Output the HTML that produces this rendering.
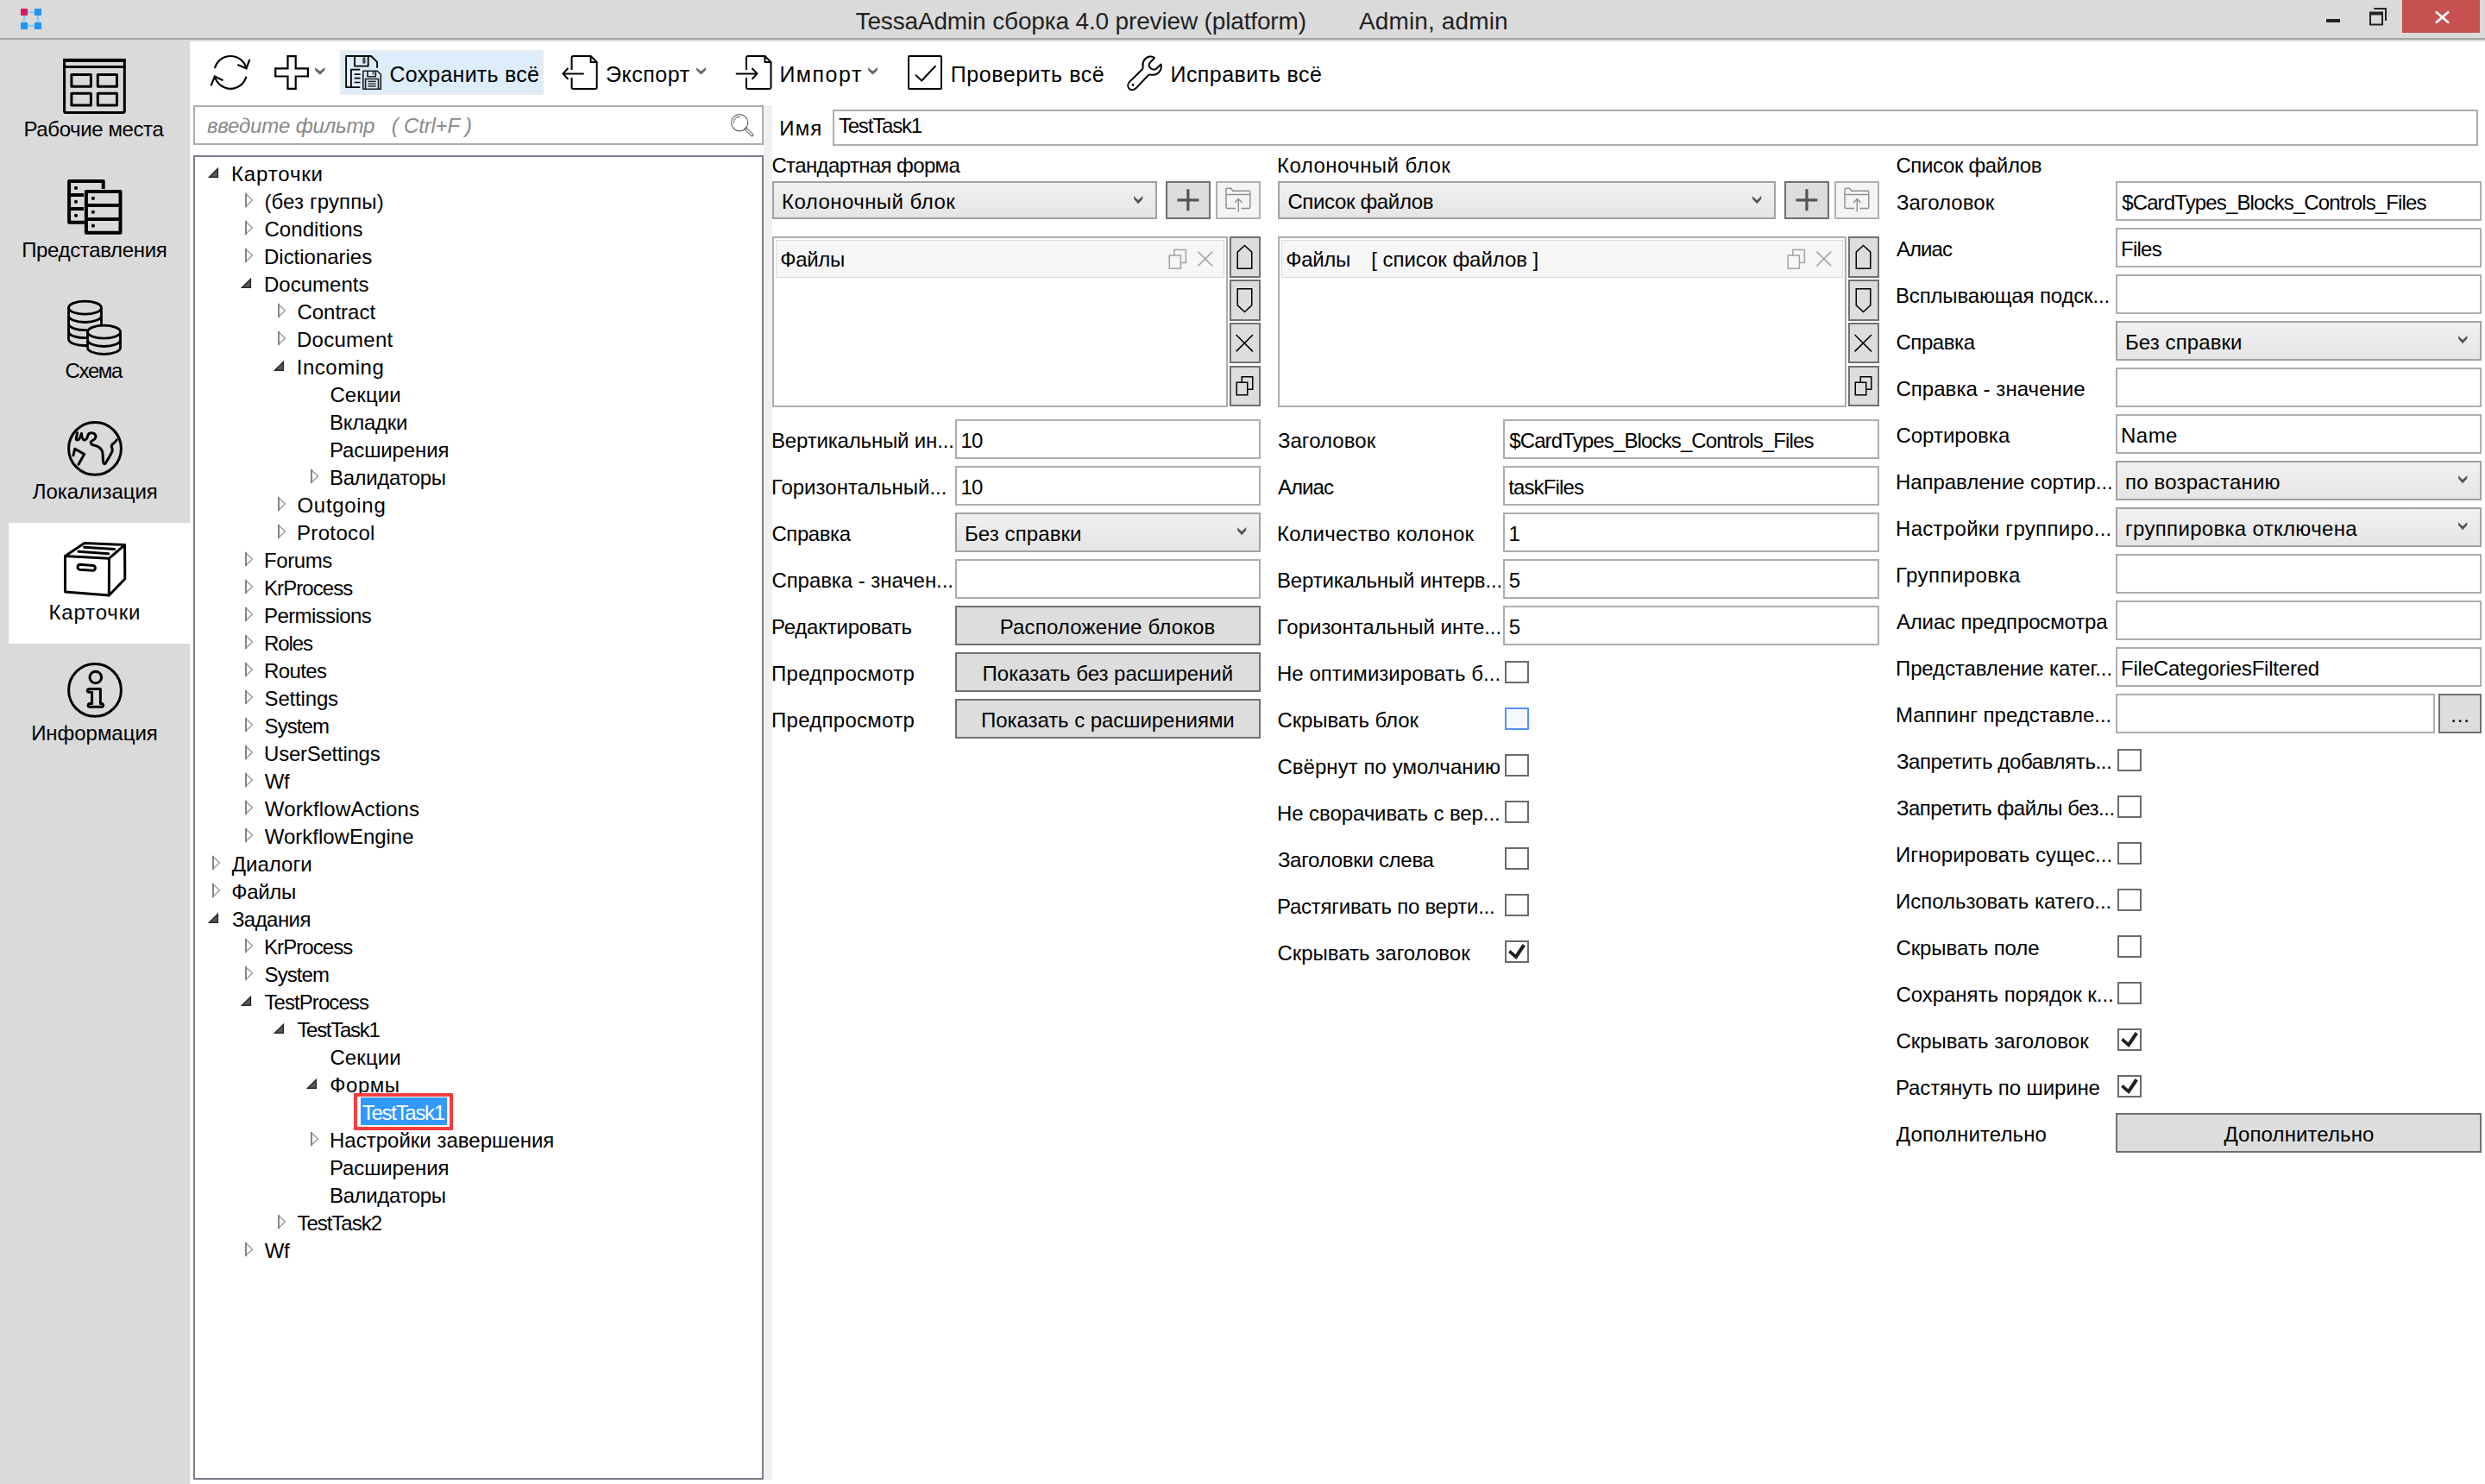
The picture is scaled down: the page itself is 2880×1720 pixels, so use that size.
<!DOCTYPE html>
<html lang="ru"><head><meta charset="utf-8"><title>TessaAdmin</title><style>
html,body{margin:0;padding:0}
body{width:2880px;height:1720px;overflow:hidden;background:#dadada;position:relative;font-family:"Liberation Sans", sans-serif;font-size:24px;color:#000}
.g{position:absolute;left:0;top:0;width:0;height:0;display:block}
body>div,.g>div,.g>svg,.g>span{position:absolute;box-sizing:border-box}
.t{white-space:pre;display:block}
svg{overflow:visible}
</style></head>
<body>
<div style="left:0px;top:44px;width:2880px;height:2px;background:#a4a4a4"></div>
<div style="left:220px;top:48px;width:2660px;height:1672px;background:#fff"></div>
<header class="g" id="titlebar">
<svg style="left:20px;top:6px" width="32" height="32" viewBox="0 0 32 32" ><g fill="#90caf9"><rect x="12" y="6.7" width="8" height="2.6"/><rect x="12" y="22.7" width="8" height="2.6"/><rect x="6.6" y="12" width="2.7" height="8"/><rect x="22.6" y="12" width="2.7" height="8"/></g>
<rect x="4" y="4" width="8" height="8" fill="#d81b60"/><rect x="20" y="4" width="8" height="8" fill="#2196f3"/><rect x="4" y="20" width="8" height="8" fill="#2196f3"/><rect x="20" y="20" width="8" height="8" fill="#2196f3"/></svg>
<span class="t" style="left:991.56px;top:6.60px;font-size:28px;line-height:35px;color:#222;letter-spacing:-0.153px;">TessaAdmin сборка 4.0 preview (platform)</span>
<span class="t" style="left:1575.00px;top:6.60px;font-size:28px;line-height:35px;color:#222;letter-spacing:0.126px;">Admin, admin</span>
<div style="left:2696px;top:22px;width:16px;height:4px;background:#222"></div>
<svg style="left:2744px;top:6px" width="26" height="26" viewBox="0 0 26 26" ><path d="M7.2 4 H21 V18" fill="none" stroke="#222" stroke-width="2"/>
<rect x="3" y="10" width="14" height="12.5" fill="none" stroke="#222" stroke-width="2"/><rect x="2" y="7.5" width="16" height="4" fill="#222"/></svg>
<div style="left:2784px;top:0px;width:90px;height:38px;background:#c75050"></div>
<svg style="left:2820px;top:11px" width="22" height="18" viewBox="0 0 22 18" ><path d="M3 2.5 L18 15.5 M18 2.5 L3 15.5" stroke="#fff" stroke-width="2.7" fill="none"/></svg>
</header>
<nav class="g" id="sidebar">
<div style="left:10px;top:606px;width:210px;height:140px;background:#fff"></div>
<svg style="left:0px;top:46px" width="220" height="140" viewBox="0 0 220 140" ><rect x="74.6" y="23.4" width="69.7" height="61.1" rx="1.5" fill="none" stroke="#000" stroke-width="3"/>
<rect x="73.1" y="21.9" width="72.7" height="4" fill="#000"/><rect x="73.1" y="30" width="72.7" height="3" fill="#000"/>
<g fill="none" stroke="#000" stroke-width="3" stroke-linejoin="round"><rect x="82.9" y="40.5" width="22.5" height="13.8"/><rect x="113.3" y="40.5" width="22.2" height="13.8"/><rect x="82.9" y="62.3" width="22.5" height="13.7"/><rect x="113.3" y="62.3" width="22.2" height="13.7"/></g></svg>
<span class="t" style="left:27.50px;top:134.68px;font-size:24px;line-height:30px;letter-spacing:-0.393px;">Рабочие места</span>
<svg style="left:0px;top:186px" width="220" height="140" viewBox="0 0 220 140" ><g fill="none" stroke="#000" stroke-width="4" stroke-linejoin="round"><path d="M97.9 71.8 H80.1 V23.9 H119.7 V33"/><path d="M80 40 H97 M80 56 H97"/>
<rect x="99.9" y="36" width="39.6" height="47.8"/><path d="M100 52 H139.5 M100 68 H139.5"/></g>
<g fill="#000"><circle cx="88" cy="31.9" r="2.1"/><circle cx="88" cy="47.8" r="2.1"/><circle cx="88" cy="63.8" r="2.1"/><circle cx="107.9" cy="43.9" r="2.1"/><circle cx="107.9" cy="59.8" r="2.1"/><circle cx="107.9" cy="75.7" r="2.1"/></g></svg>
<span class="t" style="left:25.15px;top:274.68px;font-size:24px;line-height:30px;letter-spacing:-0.342px;">Представления</span>
<svg style="left:0px;top:326px" width="220" height="140" viewBox="0 0 220 140" ><g fill="none" stroke="#000" stroke-width="2.8">
<ellipse cx="98.5" cy="30.7" rx="19" ry="7.5"/>
<path d="M79.5 30.7 V67 M117.5 30.7 V51"/>
<path d="M79.5 40 A19 7.5 0 0 0 117.5 40"/>
<path d="M79.5 49.3 A19 7.5 0 0 0 101 56.6"/>
<path d="M79.5 58.2 A19 7.5 0 0 0 101.5 65.6"/>
<path d="M79.5 67 A19 7.5 0 0 0 101.5 74.4"/>
<ellipse cx="120.5" cy="58.7" rx="19" ry="7.5"/>
<path d="M101.5 58.7 V77 M139.5 58.7 V77"/>
<path d="M101.5 68 A19 7.5 0 0 0 139.5 68"/>
<path d="M101.5 77 A19 7.5 0 0 0 139.5 77"/></g></svg>
<span class="t" style="left:75.60px;top:414.68px;font-size:24px;line-height:30px;letter-spacing:-1.378px;">Схема</span>
<svg style="left:0px;top:466px" width="220" height="140" viewBox="0 0 220 140" ><circle cx="110" cy="53.9" r="30.4" fill="none" stroke="#000" stroke-width="3"/>
<g fill="none" stroke="#000" stroke-width="3" stroke-linecap="round" stroke-linejoin="round">
<path d="M89.6 35.8 C88.5 41 87.5 44 89.5 44 C92 44 93.5 40 94.5 36.5 C94.5 41 96 44.5 98.5 44 C101.5 43.5 101 39 103 36.5 C106 35 111 36 111 40 C111 43.5 107 44.5 105.3 46 C105 48 106 49.5 108.5 50 C113 51 116 52 118 56 C120 60 119 66 119.5 69 C120 72 121.5 72.5 122.5 70.5 C125 66.5 128.5 61 130 57 C131 54 128.5 52 129.5 50 C131 47.5 134 47 135.3 43.8"/>
<path d="M84.9 61.8 L86.8 54.2 L97.6 60.4 L91 72.2"/></g></svg>
<span class="t" style="left:37.75px;top:554.68px;font-size:24px;line-height:30px;letter-spacing:-0.029px;">Локализация</span>
<svg style="left:0px;top:606px" width="220" height="140" viewBox="0 0 220 140" ><g fill="none" stroke="#000" stroke-width="3" stroke-linejoin="round" stroke-linecap="round">
<path d="M75.5 38.6 L126.5 41.2 L126.3 84 L75.5 80 Z"/>
<path d="M75.5 38.6 L97.8 23.6 L144.6 25.6 L126.5 41.2"/>
<path d="M144.6 25.6 L144.8 65 L126.3 84"/>
<path d="M97.5 28.2 L132.8 30.5 M91 33.2 L125.8 35.8"/>
<path d="M92.6 48.3 L108 49.4 A3 3 0 0 1 107.8 55.3 L92.4 54.2 A3 3 0 0 1 92.6 48.3 Z"/></g></svg>
<span class="t" style="left:56.45px;top:694.68px;font-size:24px;line-height:30px;letter-spacing:0.844px;">Карточки</span>
<svg style="left:0px;top:746px" width="220" height="140" viewBox="0 0 220 140" ><circle cx="110" cy="53.9" r="30.4" fill="none" stroke="#000" stroke-width="3"/>
<circle cx="110.8" cy="39" r="6.8" fill="none" stroke="#000" stroke-width="3"/>
<path d="M103.2 52.4 H116.4 V69.6 H118.6 A2 2 0 0 1 118.6 73.2 H103.2 A2 2 0 0 1 103.2 69.6 H106.6 V56.2 H103.2 A1.9 1.9 0 0 1 103.2 52.4 Z" fill="none" stroke="#000" stroke-width="3" stroke-linejoin="round"/></svg>
<span class="t" style="left:36.15px;top:834.68px;font-size:24px;line-height:30px;letter-spacing:-0.038px;">Информация</span>
</nav>
<div class="g" id="toolbar">
<svg style="left:240px;top:60px" width="54" height="48" viewBox="0 0 54 48" ><g fill="none" stroke="#000" stroke-width="2.2" stroke-linecap="butt">
<path d="M9 19.1 A18.8 18.8 0 0 1 45.4 19.1"/><path d="M35.4 14.9 L45.5 19.2 L49.4 8.8"/>
<path d="M45.4 28.7 A18.8 18.8 0 0 1 9 28.7"/><path d="M4.5 39.3 L8.9 28.6 L18.5 33.2"/></g></svg>
<svg style="left:318px;top:64px" width="40" height="40" viewBox="0 0 40 40" ><path d="M15.5 1.2 H24.7 V15.3 H38.9 V24.5 H24.7 V38.8 H15.5 V24.5 H1.2 V15.3 H15.5 Z" fill="none" stroke="#000" stroke-width="2.2"/></svg>
<svg style="left:364.7px;top:78px" width="11.6" height="8.8" viewBox="0 0 11.6 8.8" ><path d="M0 0.2 L5.8 4.576 L11.6 0 L11.4 3.52 L5.8 8.8 L0.2 3.52 Z" fill="#666"/></svg>
<div style="left:394px;top:58px;width:236px;height:52px;background:#deedfc;border:2px solid #ebebeb"></div>
<svg style="left:398px;top:62px" width="48" height="44" viewBox="0 0 48 44" ><g fill="none" stroke="#000" stroke-width="1.8" stroke-linejoin="round">
<path d="M19.3 39.2 H3.1 V3 H32 L39.1 9.9 V16.8"/>
<path d="M13.1 3 V14.7 H28.7 V3"/>
<path d="M19.3 18.7 H8.9 V39.2"/>
</g>
<rect x="22.3" y="4.3" width="3.3" height="7.5" rx="1.4" fill="#4a4a4a"/>
<g stroke="#000" stroke-width="1.7" stroke-linecap="round"><path d="M13.4 24.1 H19 M13.4 28.7 H19 M13.4 33.5 H19"/></g>
<g fill="none" stroke="#1a1a1a" stroke-width="1.6" stroke-linejoin="round"><path d="M22.8 20.3 H39.3 L43.3 24.3 V41.3 H22.8 Z"/><path d="M28 20.3 V26.7 H37.4 V20.3"/><path d="M25.6 41.3 V29.5 H40.5 V41.3"/></g>
<rect x="33.7" y="21" width="1.8" height="3.8" rx="0.8" fill="#4a4a4a"/>
<g stroke-width="1.5"><path d="M28.5 32.4 H37.7" stroke="#222"/><path d="M28.5 35.2 H37.7 M28.5 38 H37.7" stroke="#5a5a5a" stroke-width="1.9"/></g></svg>
<span class="t" style="left:451.50px;top:71.14px;font-size:25px;line-height:31px;letter-spacing:0.227px;">Сохранить всё</span>
<svg style="left:648px;top:60px" width="48" height="48" viewBox="0 0 48 48" ><g fill="none" stroke="#000" stroke-width="2" stroke-linejoin="round">
<path d="M14.6 21 V7 A2 2 0 0 1 16.6 5 H36.6 L43.7 12 V41 A2 2 0 0 1 41.7 43 H16.6 A2 2 0 0 1 14.6 41 V30"/>
<path d="M36.6 5 V12 H43.7"/><path d="M28.7 25.4 H4.6 M10.4 19 L4.4 25.4 L10.4 31.8"/></g></svg>
<span class="t" style="left:702.00px;top:71.14px;font-size:25px;line-height:31px;letter-spacing:0.536px;">Экспорт</span>
<svg style="left:807.3px;top:78.2px" width="11" height="8.6" viewBox="0 0 11 8.6" ><path d="M0 0.2 L5.5 4.472 L11 0 L10.8 3.44 L5.5 8.6 L0.2 3.44 Z" fill="#666"/></svg>
<svg style="left:848px;top:60px" width="48" height="48" viewBox="0 0 48 48" ><g fill="none" stroke="#000" stroke-width="2" stroke-linejoin="round">
<path d="M17 21 V7 A2 2 0 0 1 19 5 H38.5 L45.5 12 V41 A2 2 0 0 1 43.5 43 H19 A2 2 0 0 1 17 41 V30"/>
<path d="M38.5 5 V12 H45.5"/><path d="M4.8 25.4 H29.4 M23.5 19 L29.6 25.4 L23.5 31.8"/></g></svg>
<span class="t" style="left:903.40px;top:71.14px;font-size:25px;line-height:31px;letter-spacing:1.510px;">Импорт</span>
<svg style="left:1006px;top:78.2px" width="11" height="8.6" viewBox="0 0 11 8.6" ><path d="M0 0.2 L5.5 4.472 L11 0 L10.8 3.44 L5.5 8.6 L0.2 3.44 Z" fill="#666"/></svg>
<svg style="left:1052px;top:64px" width="40" height="40" viewBox="0 0 40 40" ><rect x="1" y="1" width="38" height="38" rx="1" fill="none" stroke="#000" stroke-width="2"/><path d="M9 22.6 L16.2 29.5 L32.4 12.2" fill="none" stroke="#000" stroke-width="2"/></svg>
<span class="t" style="left:1101.80px;top:71.14px;font-size:25px;line-height:31px;letter-spacing:0.536px;">Проверить всё</span>
<svg style="left:1305px;top:62px" width="46" height="46" viewBox="0 0 46 46" ><path d="M27.5 3.6 C22 4.5 18.5 9.5 19.6 15.2 C19.9 16.6 19.6 17.6 18.7 18.5 L4.3 32.6 C1.6 35.3 1.7 38.6 3.6 40.6 C5.6 42.7 9 42.7 11.5 40.2 L25.6 25.5 C26.6 24.5 27.6 24.3 28.9 24.6 C34.5 25.8 39.8 22.2 40.8 16.4 C41 15.2 40.9 13.8 40.5 12.6 L35.2 17.6 C33.5 19.2 30.6 18.9 28.6 17 C26.6 15 26.2 12.4 27.8 10.6 L33 5 C31.5 3.7 29.3 3.3 27.5 3.6 Z" fill="none" stroke="#000" stroke-width="2" stroke-linejoin="round"/><circle cx="8" cy="36.4" r="1.4" fill="#000"/></svg>
<span class="t" style="left:1356.50px;top:71.14px;font-size:25px;line-height:31px;letter-spacing:0.452px;">Исправить всё</span>
</div>
<aside class="g" id="navigator">
<div style="left:224px;top:122px;width:661px;height:46px;border:2px solid #abadb3;background:#fff"></div>
<span class="t" style="left:239.90px;top:131.18px;font-size:24px;line-height:30px;color:#8a8a8a;letter-spacing:-0.180px;font-style:italic;">введите фильтр   ( Ctrl+F )</span>
<svg style="left:844px;top:128px" width="34" height="34" viewBox="0 0 34 34" ><circle cx="13.2" cy="14.2" r="9.6" fill="none" stroke="#6e6e6e" stroke-width="1.3"/><path d="M6.45 14.6 A6.85 6.85 0 0 1 14 7.3" fill="none" stroke="#6e6e6e" stroke-width="1.2"/><path d="M20.4 21.3 L27.6 28.5" stroke="#6e6e6e" stroke-width="3.8" stroke-linecap="round"/><path d="M21.2 22.1 L27.3 28.2" stroke="#fff" stroke-width="1.5" stroke-linecap="round"/></svg>
<div style="left:224px;top:180px;width:661px;height:1535px;border:2px solid #787e8a;background:#fff"></div>
<div style="left:885px;top:122px;width:10px;height:1593px;background:#f0f0f0"></div>
<span class="t" style="left:268.00px;top:187.28px;font-size:24px;line-height:30px;letter-spacing:0.844px;">Карточки</span>
<span class="t" style="left:306.40px;top:219.28px;font-size:24px;line-height:30px;letter-spacing:0.115px;">(без группы)</span>
<span class="t" style="left:306.40px;top:251.28px;font-size:24px;line-height:30px;letter-spacing:0.089px;">Conditions</span>
<span class="t" style="left:306.00px;top:283.28px;font-size:24px;line-height:30px;letter-spacing:-0.016px;">Dictionaries</span>
<span class="t" style="left:306.00px;top:315.28px;font-size:24px;line-height:30px;letter-spacing:0.015px;">Documents</span>
<span class="t" style="left:344.40px;top:347.28px;font-size:24px;line-height:30px;letter-spacing:0.009px;">Contract</span>
<span class="t" style="left:344.00px;top:379.28px;font-size:24px;line-height:30px;letter-spacing:0.269px;">Document</span>
<span class="t" style="left:343.70px;top:411.28px;font-size:24px;line-height:30px;letter-spacing:0.538px;">Incoming</span>
<span class="t" style="left:382.40px;top:443.28px;font-size:24px;line-height:30px;letter-spacing:0.114px;">Секции</span>
<span class="t" style="left:382.00px;top:475.28px;font-size:24px;line-height:30px;letter-spacing:-0.272px;">Вкладки</span>
<span class="t" style="left:382.00px;top:507.28px;font-size:24px;line-height:30px;letter-spacing:-0.130px;">Расширения</span>
<span class="t" style="left:382.00px;top:539.28px;font-size:24px;line-height:30px;letter-spacing:-0.368px;">Валидаторы</span>
<span class="t" style="left:344.50px;top:571.28px;font-size:24px;line-height:30px;letter-spacing:0.692px;">Outgoing</span>
<span class="t" style="left:344.00px;top:603.28px;font-size:24px;line-height:30px;letter-spacing:0.341px;">Protocol</span>
<span class="t" style="left:306.00px;top:635.28px;font-size:24px;line-height:30px;letter-spacing:-0.408px;">Forums</span>
<span class="t" style="left:306.00px;top:667.28px;font-size:24px;line-height:30px;letter-spacing:-0.937px;">KrProcess</span>
<span class="t" style="left:306.00px;top:699.28px;font-size:24px;line-height:30px;letter-spacing:-0.600px;">Permissions</span>
<span class="t" style="left:306.00px;top:731.28px;font-size:24px;line-height:30px;letter-spacing:-1.065px;">Roles</span>
<span class="t" style="left:306.00px;top:763.28px;font-size:24px;line-height:30px;letter-spacing:-0.629px;">Routes</span>
<span class="t" style="left:306.60px;top:795.28px;font-size:24px;line-height:30px;letter-spacing:-0.174px;">Settings</span>
<span class="t" style="left:306.60px;top:827.28px;font-size:24px;line-height:30px;letter-spacing:-0.945px;">System</span>
<span class="t" style="left:306.10px;top:859.28px;font-size:24px;line-height:30px;letter-spacing:-0.254px;">UserSettings</span>
<span class="t" style="left:306.80px;top:891.28px;font-size:24px;line-height:30px;letter-spacing:-0.352px;">Wf</span>
<span class="t" style="left:306.80px;top:923.28px;font-size:24px;line-height:30px;letter-spacing:0.168px;">WorkflowActions</span>
<span class="t" style="left:306.80px;top:955.28px;font-size:24px;line-height:30px;letter-spacing:-0.017px;">WorkflowEngine</span>
<span class="t" style="left:268.80px;top:987.28px;font-size:24px;line-height:30px;">Диалоги</span>
<span class="t" style="left:268.30px;top:1019.28px;font-size:24px;line-height:30px;letter-spacing:-0.326px;">Файлы</span>
<span class="t" style="left:268.90px;top:1051.28px;font-size:24px;line-height:30px;letter-spacing:-0.543px;">Задания</span>
<span class="t" style="left:306.00px;top:1083.28px;font-size:24px;line-height:30px;letter-spacing:-0.937px;">KrProcess</span>
<span class="t" style="left:306.60px;top:1115.28px;font-size:24px;line-height:30px;letter-spacing:-0.945px;">System</span>
<span class="t" style="left:306.40px;top:1147.28px;font-size:24px;line-height:30px;letter-spacing:-0.921px;">TestProcess</span>
<span class="t" style="left:344.40px;top:1179.28px;font-size:24px;line-height:30px;letter-spacing:-1.295px;">TestTask1</span>
<span class="t" style="left:382.40px;top:1211.28px;font-size:24px;line-height:30px;letter-spacing:0.114px;">Секции</span>
<span class="t" style="left:382.30px;top:1243.28px;font-size:24px;line-height:30px;letter-spacing:0.515px;">Формы</span>
<div style="left:410px;top:1267px;width:115px;height:43px;border:4px solid #fa3c3f;background:#fff"></div>
<div style="left:418px;top:1272px;width:100px;height:32px;background:#3399ff"></div>
<span class="t" style="left:419.80px;top:1275.28px;font-size:24px;line-height:30px;color:#fff;letter-spacing:-1.295px;">TestTask1</span>
<span class="t" style="left:382.00px;top:1307.28px;font-size:24px;line-height:30px;letter-spacing:0.009px;">Настройки завершения</span>
<span class="t" style="left:382.00px;top:1339.28px;font-size:24px;line-height:30px;letter-spacing:-0.130px;">Расширения</span>
<span class="t" style="left:382.00px;top:1371.28px;font-size:24px;line-height:30px;letter-spacing:-0.368px;">Валидаторы</span>
<span class="t" style="left:344.40px;top:1403.28px;font-size:24px;line-height:30px;letter-spacing:-1.008px;">TestTask2</span>
<span class="t" style="left:306.80px;top:1435.28px;font-size:24px;line-height:30px;letter-spacing:-0.352px;">Wf</span>
<svg style="left:224px;top:184px" width="400" height="1290" viewBox="0 0 400 1290" ><path d="M28.4 11.5 V21.3 H18.5 Z" fill="#595959" stroke="#262626" stroke-width="1.4" stroke-linejoin="miter"/><path d="M61 40.9 L68.5 48 L61 55.1 Z" fill="#fff" stroke="#9a9a9a" stroke-width="1.4" stroke-linejoin="round"/><rect x="60" y="39.8" width="2" height="16.4" fill="#858585"/><path d="M61 72.9 L68.5 80 L61 87.1 Z" fill="#fff" stroke="#9a9a9a" stroke-width="1.4" stroke-linejoin="round"/><rect x="60" y="71.8" width="2" height="16.4" fill="#858585"/><path d="M61 104.9 L68.5 112 L61 119.1 Z" fill="#fff" stroke="#9a9a9a" stroke-width="1.4" stroke-linejoin="round"/><rect x="60" y="103.8" width="2" height="16.4" fill="#858585"/><path d="M66.4 139.5 V149.3 H56.5 Z" fill="#595959" stroke="#262626" stroke-width="1.4" stroke-linejoin="miter"/><path d="M99 168.9 L106.5 176 L99 183.1 Z" fill="#fff" stroke="#9a9a9a" stroke-width="1.4" stroke-linejoin="round"/><rect x="98" y="167.8" width="2" height="16.4" fill="#858585"/><path d="M99 200.9 L106.5 208 L99 215.1 Z" fill="#fff" stroke="#9a9a9a" stroke-width="1.4" stroke-linejoin="round"/><rect x="98" y="199.8" width="2" height="16.4" fill="#858585"/><path d="M104.4 235.5 V245.3 H94.5 Z" fill="#595959" stroke="#262626" stroke-width="1.4" stroke-linejoin="miter"/><path d="M137 360.9 L144.5 368 L137 375.1 Z" fill="#fff" stroke="#9a9a9a" stroke-width="1.4" stroke-linejoin="round"/><rect x="136" y="359.8" width="2" height="16.4" fill="#858585"/><path d="M99 392.9 L106.5 400 L99 407.1 Z" fill="#fff" stroke="#9a9a9a" stroke-width="1.4" stroke-linejoin="round"/><rect x="98" y="391.8" width="2" height="16.4" fill="#858585"/><path d="M99 424.9 L106.5 432 L99 439.1 Z" fill="#fff" stroke="#9a9a9a" stroke-width="1.4" stroke-linejoin="round"/><rect x="98" y="423.8" width="2" height="16.4" fill="#858585"/><path d="M61 456.9 L68.5 464 L61 471.1 Z" fill="#fff" stroke="#9a9a9a" stroke-width="1.4" stroke-linejoin="round"/><rect x="60" y="455.8" width="2" height="16.4" fill="#858585"/><path d="M61 488.9 L68.5 496 L61 503.1 Z" fill="#fff" stroke="#9a9a9a" stroke-width="1.4" stroke-linejoin="round"/><rect x="60" y="487.8" width="2" height="16.4" fill="#858585"/><path d="M61 520.9 L68.5 528 L61 535.1 Z" fill="#fff" stroke="#9a9a9a" stroke-width="1.4" stroke-linejoin="round"/><rect x="60" y="519.8" width="2" height="16.4" fill="#858585"/><path d="M61 552.9 L68.5 560 L61 567.1 Z" fill="#fff" stroke="#9a9a9a" stroke-width="1.4" stroke-linejoin="round"/><rect x="60" y="551.8" width="2" height="16.4" fill="#858585"/><path d="M61 584.9 L68.5 592 L61 599.1 Z" fill="#fff" stroke="#9a9a9a" stroke-width="1.4" stroke-linejoin="round"/><rect x="60" y="583.8" width="2" height="16.4" fill="#858585"/><path d="M61 616.9 L68.5 624 L61 631.1 Z" fill="#fff" stroke="#9a9a9a" stroke-width="1.4" stroke-linejoin="round"/><rect x="60" y="615.8" width="2" height="16.4" fill="#858585"/><path d="M61 648.9 L68.5 656 L61 663.1 Z" fill="#fff" stroke="#9a9a9a" stroke-width="1.4" stroke-linejoin="round"/><rect x="60" y="647.8" width="2" height="16.4" fill="#858585"/><path d="M61 680.9 L68.5 688 L61 695.1 Z" fill="#fff" stroke="#9a9a9a" stroke-width="1.4" stroke-linejoin="round"/><rect x="60" y="679.8" width="2" height="16.4" fill="#858585"/><path d="M61 712.9 L68.5 720 L61 727.1 Z" fill="#fff" stroke="#9a9a9a" stroke-width="1.4" stroke-linejoin="round"/><rect x="60" y="711.8" width="2" height="16.4" fill="#858585"/><path d="M61 744.9 L68.5 752 L61 759.1 Z" fill="#fff" stroke="#9a9a9a" stroke-width="1.4" stroke-linejoin="round"/><rect x="60" y="743.8" width="2" height="16.4" fill="#858585"/><path d="M61 776.9 L68.5 784 L61 791.1 Z" fill="#fff" stroke="#9a9a9a" stroke-width="1.4" stroke-linejoin="round"/><rect x="60" y="775.8" width="2" height="16.4" fill="#858585"/><path d="M23 808.9 L30.5 816 L23 823.1 Z" fill="#fff" stroke="#9a9a9a" stroke-width="1.4" stroke-linejoin="round"/><rect x="22" y="807.8" width="2" height="16.4" fill="#858585"/><path d="M23 840.9 L30.5 848 L23 855.1 Z" fill="#fff" stroke="#9a9a9a" stroke-width="1.4" stroke-linejoin="round"/><rect x="22" y="839.8" width="2" height="16.4" fill="#858585"/><path d="M28.4 875.5 V885.3 H18.5 Z" fill="#595959" stroke="#262626" stroke-width="1.4" stroke-linejoin="miter"/><path d="M61 904.9 L68.5 912 L61 919.1 Z" fill="#fff" stroke="#9a9a9a" stroke-width="1.4" stroke-linejoin="round"/><rect x="60" y="903.8" width="2" height="16.4" fill="#858585"/><path d="M61 936.9 L68.5 944 L61 951.1 Z" fill="#fff" stroke="#9a9a9a" stroke-width="1.4" stroke-linejoin="round"/><rect x="60" y="935.8" width="2" height="16.4" fill="#858585"/><path d="M66.4 971.5 V981.3 H56.5 Z" fill="#595959" stroke="#262626" stroke-width="1.4" stroke-linejoin="miter"/><path d="M104.4 1003.5 V1013.3 H94.5 Z" fill="#595959" stroke="#262626" stroke-width="1.4" stroke-linejoin="miter"/><path d="M142.4 1067.5 V1077.3 H132.5 Z" fill="#595959" stroke="#262626" stroke-width="1.4" stroke-linejoin="miter"/><path d="M137 1128.9 L144.5 1136 L137 1143.1 Z" fill="#fff" stroke="#9a9a9a" stroke-width="1.4" stroke-linejoin="round"/><rect x="136" y="1127.8" width="2" height="16.4" fill="#858585"/><path d="M99 1224.9 L106.5 1232 L99 1239.1 Z" fill="#fff" stroke="#9a9a9a" stroke-width="1.4" stroke-linejoin="round"/><rect x="98" y="1223.8" width="2" height="16.4" fill="#858585"/><path d="M61 1256.9 L68.5 1264 L61 1271.1 Z" fill="#fff" stroke="#9a9a9a" stroke-width="1.4" stroke-linejoin="round"/><rect x="60" y="1255.8" width="2" height="16.4" fill="#858585"/></svg>
</aside>
<main class="g" id="editor">
<span class="t" style="left:903.30px;top:134.08px;font-size:24px;line-height:30px;letter-spacing:1.125px;">Имя</span>
<div style="left:965px;top:127px;width:1907px;height:42px;border:2px solid #abadb3;background:#fff"></div>
<span class="t" style="left:971.90px;top:130.58px;font-size:24px;line-height:30px;letter-spacing:-1.183px;">TestTask1</span>
<section class="g" id="col-form">
<span class="t" style="left:894.40px;top:176.88px;font-size:24px;line-height:30px;letter-spacing:-0.620px;">Стандартная форма</span>
<div style="left:895px;top:210px;width:446px;height:44px;border:2px solid #a2a2a2;background:linear-gradient(#f1f1f1,#e5e5e5)"></div>
<svg style="left:1313.7px;top:226.8px" width="10.4" height="9.3" viewBox="0 0 10.4 9.3" ><path d="M0 0.2 L5.1 4.9 L10.4 0 L10.2 3.7 L5.1 9.3 L0.2 3.7 Z" fill="#555"/></svg>
<span class="t" style="left:906.00px;top:218.68px;font-size:24px;line-height:30px;letter-spacing:0.452px;">Колоночный блок</span>
<div style="left:1351px;top:210px;width:52px;height:44px;border:2px solid #707070;background:#dddddd"></div>
<svg style="left:1351px;top:210px" width="52" height="44" viewBox="0 0 52 44" ><path d="M13.4 21.9 H38.4 M25.9 9.3 V34.3" stroke="#555" stroke-width="3.2" fill="none"/></svg>
<div style="left:1409px;top:210px;width:52px;height:44px;border:2px solid #adb2b5;background:#f4f4f4"></div>
<svg style="left:1409px;top:210px" width="52" height="44" viewBox="0 0 52 44" ><g fill="none" stroke="#8d8d8d" stroke-width="1.4" stroke-linejoin="round">
<path d="M23 31.5 H13.5 A1.5 1.5 0 0 1 12 30 V9.8 A1.5 1.5 0 0 1 13.5 8.3 H17.5 L19.8 11.3 H38.3 A1.5 1.5 0 0 1 39.8 12.8 V30 A1.5 1.5 0 0 1 38.3 31.5 H29.5"/>
<path d="M12 15.5 H39.8"/><path d="M26.3 35.6 V20.6 M22 24.9 L26.3 20.6 L30.6 24.9"/></g></svg>
<div style="left:895px;top:274px;width:528px;height:197.5px;border:2px solid #abadb3;background:#fff"></div>
<div style="left:899.3px;top:278.3px;width:519.4px;height:43.4px;border:1.5px solid #dadada;background:#f6f6f6"></div>
<span class="t" style="left:904.30px;top:286.28px;font-size:24px;line-height:30px;letter-spacing:-0.326px;">Файлы</span>
<svg style="left:1352.7px;top:286px" width="24" height="28" viewBox="0 0 24 28" ><g fill="none" stroke="#a3a3a3" stroke-width="1.5"><rect x="2.2" y="10" width="13.2" height="15.2"/><path d="M7.8 10 V3.4 H21.4 V18.6 H15.4"/></g></svg>
<svg style="left:1387.2px;top:290px" width="20" height="20" viewBox="0 0 20 20" ><path d="M1.4 1.6 L18.2 18.4 M18.2 1.6 L1.4 18.4" stroke="#a8a8a8" stroke-width="1.6" fill="none"/></svg>
<div style="left:1425px;top:274px;width:36px;height:48px;border:2px solid #707070;background:#dddddd"></div>
<svg style="left:1425px;top:274px" width="36" height="48" viewBox="0 0 36 48" ><path d="M17.5 10.5 L25.75 18.2 V37.25 H9.25 V18.2 Z" fill="none" stroke="#000" stroke-width="1.5"/></svg>
<div style="left:1425px;top:324px;width:36px;height:48px;border:2px solid #707070;background:#dddddd"></div>
<svg style="left:1425px;top:324px" width="36" height="48" viewBox="0 0 36 48" ><path d="M17.5 37.5 L25.75 29.8 V10.75 H9.25 V29.8 Z" fill="none" stroke="#000" stroke-width="1.5"/></svg>
<div style="left:1425px;top:374px;width:36px;height:47px;border:2px solid #707070;background:#dddddd"></div>
<svg style="left:1425px;top:374px" width="36" height="48" viewBox="0 0 36 48" ><path d="M7.6 14 L27 33.4 M27 14 L7.6 33.4" fill="none" stroke="#000" stroke-width="1.5"/></svg>
<div style="left:1425px;top:424px;width:36px;height:47px;border:2px solid #707070;background:#dddddd"></div>
<svg style="left:1425px;top:424px" width="36" height="48" viewBox="0 0 36 48" ><g fill="none" stroke="#000" stroke-width="1.5"><rect x="8.25" y="19.25" width="12.5" height="14.5"/><path d="M14.25 19.25 V12.75 H26.75 V27.25 H20.75"/></g></svg>
<span class="t" style="left:894.00px;top:495.98px;font-size:24px;line-height:30px;letter-spacing:-0.167px;">Вертикальный ин...</span>
<div style="left:1107px;top:486px;width:354px;height:46px;border:2px solid #abadb3;background:#fff"></div>
<span class="t" style="left:1113.40px;top:495.98px;font-size:24px;line-height:30px;letter-spacing:-0.848px;">10</span>
<span class="t" style="left:894.00px;top:549.98px;font-size:24px;line-height:30px;letter-spacing:0.009px;">Горизонтальный...</span>
<div style="left:1107px;top:540px;width:354px;height:46px;border:2px solid #abadb3;background:#fff"></div>
<span class="t" style="left:1113.40px;top:549.98px;font-size:24px;line-height:30px;letter-spacing:-0.848px;">10</span>
<span class="t" style="left:894.40px;top:603.98px;font-size:24px;line-height:30px;letter-spacing:-0.417px;">Справка</span>
<div style="left:1107px;top:594px;width:354px;height:46px;border:2px solid #a2a2a2;background:linear-gradient(#f1f1f1,#e5e5e5)"></div>
<svg style="left:1433.7px;top:610.8px" width="10.4" height="9.3" viewBox="0 0 10.4 9.3" ><path d="M0 0.2 L5.1 4.9 L10.4 0 L10.2 3.7 L5.1 9.3 L0.2 3.7 Z" fill="#555"/></svg>
<span class="t" style="left:1118.00px;top:603.98px;font-size:24px;line-height:30px;letter-spacing:0.092px;">Без справки</span>
<span class="t" style="left:894.40px;top:657.98px;font-size:24px;line-height:30px;letter-spacing:-0.061px;">Справка - значен...</span>
<div style="left:1107px;top:648px;width:354px;height:46px;border:2px solid #abadb3;background:#fff"></div>
<span class="t" style="left:894.00px;top:711.98px;font-size:24px;line-height:30px;letter-spacing:-0.223px;">Редактировать</span>
<div style="left:1107px;top:702px;width:354px;height:46px;border:2px solid #707070;background:#dddddd"></div>
<span class="t" style="left:1158.75px;top:711.98px;font-size:24px;line-height:30px;letter-spacing:0.144px;">Расположение блоков</span>
<span class="t" style="left:894.00px;top:765.98px;font-size:24px;line-height:30px;letter-spacing:0.279px;">Предпросмотр</span>
<div style="left:1107px;top:756px;width:354px;height:46px;border:2px solid #707070;background:#dddddd"></div>
<span class="t" style="left:1138.60px;top:765.98px;font-size:24px;line-height:30px;letter-spacing:-0.012px;">Показать без расширений</span>
<span class="t" style="left:894.00px;top:819.98px;font-size:24px;line-height:30px;letter-spacing:0.279px;">Предпросмотр</span>
<div style="left:1107px;top:810px;width:354px;height:46px;border:2px solid #707070;background:#dddddd"></div>
<span class="t" style="left:1136.95px;top:819.98px;font-size:24px;line-height:30px;letter-spacing:-0.053px;">Показать с расширениями</span>
</section>
<section class="g" id="col-block">
<span class="t" style="left:1480.00px;top:176.88px;font-size:24px;line-height:30px;letter-spacing:0.452px;">Колоночный блок</span>
<div style="left:1481px;top:210px;width:577px;height:44px;border:2px solid #a2a2a2;background:linear-gradient(#f1f1f1,#e5e5e5)"></div>
<svg style="left:2030.7px;top:226.8px" width="10.4" height="9.3" viewBox="0 0 10.4 9.3" ><path d="M0 0.2 L5.1 4.9 L10.4 0 L10.2 3.7 L5.1 9.3 L0.2 3.7 Z" fill="#555"/></svg>
<span class="t" style="left:1492.40px;top:218.68px;font-size:24px;line-height:30px;letter-spacing:-0.353px;">Список файлов</span>
<div style="left:2068px;top:210px;width:52px;height:44px;border:2px solid #707070;background:#dddddd"></div>
<svg style="left:2068px;top:210px" width="52" height="44" viewBox="0 0 52 44" ><path d="M13.4 21.9 H38.4 M25.9 9.3 V34.3" stroke="#555" stroke-width="3.2" fill="none"/></svg>
<div style="left:2126px;top:210px;width:52px;height:44px;border:2px solid #adb2b5;background:#f4f4f4"></div>
<svg style="left:2126px;top:210px" width="52" height="44" viewBox="0 0 52 44" ><g fill="none" stroke="#8d8d8d" stroke-width="1.4" stroke-linejoin="round">
<path d="M23 31.5 H13.5 A1.5 1.5 0 0 1 12 30 V9.8 A1.5 1.5 0 0 1 13.5 8.3 H17.5 L19.8 11.3 H38.3 A1.5 1.5 0 0 1 39.8 12.8 V30 A1.5 1.5 0 0 1 38.3 31.5 H29.5"/>
<path d="M12 15.5 H39.8"/><path d="M26.3 35.6 V20.6 M22 24.9 L26.3 20.6 L30.6 24.9"/></g></svg>
<div style="left:1481px;top:274px;width:659px;height:197.5px;border:2px solid #abadb3;background:#fff"></div>
<div style="left:1485.3px;top:278.3px;width:650.4px;height:43.4px;border:1.5px solid #dadada;background:#f6f6f6"></div>
<span class="t" style="left:1490.30px;top:286.28px;font-size:24px;line-height:30px;letter-spacing:-0.326px;">Файлы</span>
<span class="t" style="left:1589.30px;top:286.28px;font-size:24px;line-height:30px;letter-spacing:-0.048px;">[ список файлов ]</span>
<svg style="left:2069.7px;top:286px" width="24" height="28" viewBox="0 0 24 28" ><g fill="none" stroke="#a3a3a3" stroke-width="1.5"><rect x="2.2" y="10" width="13.2" height="15.2"/><path d="M7.8 10 V3.4 H21.4 V18.6 H15.4"/></g></svg>
<svg style="left:2104.2px;top:290px" width="20" height="20" viewBox="0 0 20 20" ><path d="M1.4 1.6 L18.2 18.4 M18.2 1.6 L1.4 18.4" stroke="#a8a8a8" stroke-width="1.6" fill="none"/></svg>
<div style="left:2142px;top:274px;width:36px;height:48px;border:2px solid #707070;background:#dddddd"></div>
<svg style="left:2142px;top:274px" width="36" height="48" viewBox="0 0 36 48" ><path d="M17.5 10.5 L25.75 18.2 V37.25 H9.25 V18.2 Z" fill="none" stroke="#000" stroke-width="1.5"/></svg>
<div style="left:2142px;top:324px;width:36px;height:48px;border:2px solid #707070;background:#dddddd"></div>
<svg style="left:2142px;top:324px" width="36" height="48" viewBox="0 0 36 48" ><path d="M17.5 37.5 L25.75 29.8 V10.75 H9.25 V29.8 Z" fill="none" stroke="#000" stroke-width="1.5"/></svg>
<div style="left:2142px;top:374px;width:36px;height:47px;border:2px solid #707070;background:#dddddd"></div>
<svg style="left:2142px;top:374px" width="36" height="48" viewBox="0 0 36 48" ><path d="M7.6 14 L27 33.4 M27 14 L7.6 33.4" fill="none" stroke="#000" stroke-width="1.5"/></svg>
<div style="left:2142px;top:424px;width:36px;height:47px;border:2px solid #707070;background:#dddddd"></div>
<svg style="left:2142px;top:424px" width="36" height="48" viewBox="0 0 36 48" ><g fill="none" stroke="#000" stroke-width="1.5"><rect x="8.25" y="19.25" width="12.5" height="14.5"/><path d="M14.25 19.25 V12.75 H26.75 V27.25 H20.75"/></g></svg>
<span class="t" style="left:1480.90px;top:495.98px;font-size:24px;line-height:30px;letter-spacing:0.058px;">Заголовок</span>
<div style="left:1742px;top:486px;width:436px;height:46px;border:2px solid #abadb3;background:#fff"></div>
<span class="t" style="left:1749.20px;top:495.98px;font-size:24px;line-height:30px;letter-spacing:-0.867px;">$CardTypes_Blocks_Controls_Files</span>
<span class="t" style="left:1480.90px;top:549.98px;font-size:24px;line-height:30px;letter-spacing:-0.916px;">Алиас</span>
<div style="left:1742px;top:540px;width:436px;height:46px;border:2px solid #abadb3;background:#fff"></div>
<span class="t" style="left:1748.20px;top:549.98px;font-size:24px;line-height:30px;letter-spacing:-0.873px;">taskFiles</span>
<span class="t" style="left:1480.00px;top:603.98px;font-size:24px;line-height:30px;letter-spacing:0.243px;">Количество колонок</span>
<div style="left:1742px;top:594px;width:436px;height:46px;border:2px solid #abadb3;background:#fff"></div>
<span class="t" style="left:1748.40px;top:603.98px;font-size:24px;line-height:30px;">1</span>
<span class="t" style="left:1480.00px;top:657.98px;font-size:24px;line-height:30px;letter-spacing:-0.181px;">Вертикальный интерв...</span>
<div style="left:1742px;top:648px;width:436px;height:46px;border:2px solid #abadb3;background:#fff"></div>
<span class="t" style="left:1748.70px;top:657.98px;font-size:24px;line-height:30px;">5</span>
<span class="t" style="left:1480.00px;top:711.98px;font-size:24px;line-height:30px;letter-spacing:-0.026px;">Горизонтальный инте...</span>
<div style="left:1742px;top:702px;width:436px;height:46px;border:2px solid #abadb3;background:#fff"></div>
<span class="t" style="left:1748.70px;top:711.98px;font-size:24px;line-height:30px;">5</span>
<span class="t" style="left:1480.00px;top:765.98px;font-size:24px;line-height:30px;letter-spacing:0.036px;">Не оптимизировать б...</span>
<div style="left:1744px;top:766px;width:28px;height:26px;border:2px solid #6a6a6a;background:#fff"></div>
<span class="t" style="left:1480.40px;top:819.98px;font-size:24px;line-height:30px;letter-spacing:-0.090px;">Скрывать блок</span>
<div style="left:1744px;top:820px;width:28px;height:26px;border:2px solid #5591fb;background:#f4f8ff"></div>
<span class="t" style="left:1480.40px;top:873.98px;font-size:24px;line-height:30px;letter-spacing:0.050px;">Свёрнут по умолчанию</span>
<div style="left:1744px;top:874px;width:28px;height:26px;border:2px solid #6a6a6a;background:#fff"></div>
<span class="t" style="left:1480.00px;top:927.98px;font-size:24px;line-height:30px;letter-spacing:-0.086px;">Не сворачивать с вер...</span>
<div style="left:1744px;top:928px;width:28px;height:26px;border:2px solid #6a6a6a;background:#fff"></div>
<span class="t" style="left:1480.90px;top:981.98px;font-size:24px;line-height:30px;letter-spacing:-0.283px;">Заголовки слева</span>
<div style="left:1744px;top:982px;width:28px;height:26px;border:2px solid #6a6a6a;background:#fff"></div>
<span class="t" style="left:1480.00px;top:1035.98px;font-size:24px;line-height:30px;letter-spacing:-0.253px;">Растягивать по верти...</span>
<div style="left:1744px;top:1036px;width:28px;height:26px;border:2px solid #6a6a6a;background:#fff"></div>
<span class="t" style="left:1480.40px;top:1089.98px;font-size:24px;line-height:30px;">Скрывать заголовок</span>
<div style="left:1744px;top:1090px;width:28px;height:26px;border:2px solid #6a6a6a;background:#fff"></div>
<svg style="left:1744px;top:1090px" width="28" height="26" viewBox="0 0 28 26" ><path d="M6.4 11 L4.2 14.1 L13.4 22 L23.9 6.4 L20.6 4.1 L12.4 16.3 Z" fill="#212121"/></svg>
</section>
<section class="g" id="col-control">
<span class="t" style="left:2197.40px;top:176.88px;font-size:24px;line-height:30px;letter-spacing:-0.353px;">Список файлов</span>
<span class="t" style="left:2197.90px;top:219.98px;font-size:24px;line-height:30px;letter-spacing:0.058px;">Заголовок</span>
<div style="left:2452px;top:210px;width:424px;height:46px;border:2px solid #abadb3;background:#fff"></div>
<span class="t" style="left:2459.20px;top:219.98px;font-size:24px;line-height:30px;letter-spacing:-0.867px;">$CardTypes_Blocks_Controls_Files</span>
<span class="t" style="left:2197.90px;top:273.98px;font-size:24px;line-height:30px;letter-spacing:-0.916px;">Алиас</span>
<div style="left:2452px;top:264px;width:424px;height:46px;border:2px solid #abadb3;background:#fff"></div>
<span class="t" style="left:2458.00px;top:273.98px;font-size:24px;line-height:30px;letter-spacing:-0.743px;">Files</span>
<span class="t" style="left:2197.00px;top:327.98px;font-size:24px;line-height:30px;letter-spacing:-0.163px;">Всплывающая подск...</span>
<div style="left:2452px;top:318px;width:424px;height:46px;border:2px solid #abadb3;background:#fff"></div>
<span class="t" style="left:2197.40px;top:381.98px;font-size:24px;line-height:30px;letter-spacing:-0.417px;">Справка</span>
<div style="left:2452px;top:372px;width:424px;height:46px;border:2px solid #a2a2a2;background:linear-gradient(#f1f1f1,#e5e5e5)"></div>
<svg style="left:2848.7px;top:388.8px" width="10.4" height="9.3" viewBox="0 0 10.4 9.3" ><path d="M0 0.2 L5.1 4.9 L10.4 0 L10.2 3.7 L5.1 9.3 L0.2 3.7 Z" fill="#555"/></svg>
<span class="t" style="left:2463.00px;top:381.98px;font-size:24px;line-height:30px;letter-spacing:0.092px;">Без справки</span>
<span class="t" style="left:2197.40px;top:435.98px;font-size:24px;line-height:30px;letter-spacing:0.049px;">Справка - значение</span>
<div style="left:2452px;top:426px;width:424px;height:46px;border:2px solid #abadb3;background:#fff"></div>
<span class="t" style="left:2197.40px;top:489.98px;font-size:24px;line-height:30px;letter-spacing:0.014px;">Сортировка</span>
<div style="left:2452px;top:480px;width:424px;height:46px;border:2px solid #abadb3;background:#fff"></div>
<span class="t" style="left:2458.00px;top:489.98px;font-size:24px;line-height:30px;letter-spacing:0.476px;">Name</span>
<span class="t" style="left:2197.00px;top:543.98px;font-size:24px;line-height:30px;letter-spacing:-0.056px;">Направление сортир...</span>
<div style="left:2452px;top:534px;width:424px;height:46px;border:2px solid #a2a2a2;background:linear-gradient(#f1f1f1,#e5e5e5)"></div>
<svg style="left:2848.7px;top:550.8px" width="10.4" height="9.3" viewBox="0 0 10.4 9.3" ><path d="M0 0.2 L5.1 4.9 L10.4 0 L10.2 3.7 L5.1 9.3 L0.2 3.7 Z" fill="#555"/></svg>
<span class="t" style="left:2463.00px;top:543.98px;font-size:24px;line-height:30px;letter-spacing:0.200px;">по возрастанию</span>
<span class="t" style="left:2197.00px;top:597.98px;font-size:24px;line-height:30px;letter-spacing:0.300px;">Настройки группиро...</span>
<div style="left:2452px;top:588px;width:424px;height:46px;border:2px solid #a2a2a2;background:linear-gradient(#f1f1f1,#e5e5e5)"></div>
<svg style="left:2848.7px;top:604.8px" width="10.4" height="9.3" viewBox="0 0 10.4 9.3" ><path d="M0 0.2 L5.1 4.9 L10.4 0 L10.2 3.7 L5.1 9.3 L0.2 3.7 Z" fill="#555"/></svg>
<span class="t" style="left:2463.00px;top:597.98px;font-size:24px;line-height:30px;letter-spacing:0.316px;">группировка отключена</span>
<span class="t" style="left:2197.00px;top:651.98px;font-size:24px;line-height:30px;letter-spacing:0.440px;">Группировка</span>
<div style="left:2452px;top:642px;width:424px;height:46px;border:2px solid #abadb3;background:#fff"></div>
<span class="t" style="left:2197.90px;top:705.98px;font-size:24px;line-height:30px;letter-spacing:-0.142px;">Алиас предпросмотра</span>
<div style="left:2452px;top:696px;width:424px;height:46px;border:2px solid #abadb3;background:#fff"></div>
<span class="t" style="left:2197.00px;top:759.98px;font-size:24px;line-height:30px;letter-spacing:-0.114px;">Представление катег...</span>
<div style="left:2452px;top:750px;width:424px;height:46px;border:2px solid #abadb3;background:#fff"></div>
<span class="t" style="left:2458.00px;top:759.98px;font-size:24px;line-height:30px;letter-spacing:-0.220px;">FileCategoriesFiltered</span>
<span class="t" style="left:2197.00px;top:813.98px;font-size:24px;line-height:30px;letter-spacing:-0.010px;">Маппинг представле...</span>
<div style="left:2452px;top:804px;width:370px;height:46px;border:2px solid #abadb3;background:#fff"></div>
<div style="left:2826px;top:804px;width:50px;height:46px;border:2px solid #707070;background:#dddddd"></div>
<span class="t" style="left:2840.20px;top:813.98px;font-size:24px;line-height:30px;letter-spacing:0.832px;">...</span>
<span class="t" style="left:2197.90px;top:867.98px;font-size:24px;line-height:30px;letter-spacing:-0.382px;">Запретить добавлять...</span>
<div style="left:2454px;top:868px;width:28px;height:26px;border:2px solid #6a6a6a;background:#fff"></div>
<span class="t" style="left:2197.90px;top:921.98px;font-size:24px;line-height:30px;letter-spacing:-0.465px;">Запретить файлы без...</span>
<div style="left:2454px;top:922px;width:28px;height:26px;border:2px solid #6a6a6a;background:#fff"></div>
<span class="t" style="left:2197.00px;top:975.98px;font-size:24px;line-height:30px;letter-spacing:0.036px;">Игнорировать сущес...</span>
<div style="left:2454px;top:976px;width:28px;height:26px;border:2px solid #6a6a6a;background:#fff"></div>
<span class="t" style="left:2197.00px;top:1029.98px;font-size:24px;line-height:30px;letter-spacing:-0.017px;">Использовать катего...</span>
<div style="left:2454px;top:1030px;width:28px;height:26px;border:2px solid #6a6a6a;background:#fff"></div>
<span class="t" style="left:2197.40px;top:1083.98px;font-size:24px;line-height:30px;letter-spacing:-0.068px;">Скрывать поле</span>
<div style="left:2454px;top:1084px;width:28px;height:26px;border:2px solid #6a6a6a;background:#fff"></div>
<span class="t" style="left:2197.40px;top:1137.98px;font-size:24px;line-height:30px;letter-spacing:-0.028px;">Сохранять порядок к...</span>
<div style="left:2454px;top:1138px;width:28px;height:26px;border:2px solid #6a6a6a;background:#fff"></div>
<span class="t" style="left:2197.40px;top:1191.98px;font-size:24px;line-height:30px;">Скрывать заголовок</span>
<div style="left:2454px;top:1192px;width:28px;height:26px;border:2px solid #6a6a6a;background:#fff"></div>
<svg style="left:2454px;top:1192px" width="28" height="26" viewBox="0 0 28 26" ><path d="M6.4 11 L4.2 14.1 L13.4 22 L23.9 6.4 L20.6 4.1 L12.4 16.3 Z" fill="#212121"/></svg>
<span class="t" style="left:2197.00px;top:1245.98px;font-size:24px;line-height:30px;letter-spacing:-0.114px;">Растянуть по ширине</span>
<div style="left:2454px;top:1246px;width:28px;height:26px;border:2px solid #6a6a6a;background:#fff"></div>
<svg style="left:2454px;top:1246px" width="28" height="26" viewBox="0 0 28 26" ><path d="M6.4 11 L4.2 14.1 L13.4 22 L23.9 6.4 L20.6 4.1 L12.4 16.3 Z" fill="#212121"/></svg>
<span class="t" style="left:2197.80px;top:1299.98px;font-size:24px;line-height:30px;letter-spacing:0.109px;">Дополнительно</span>
<div style="left:2452px;top:1290px;width:424px;height:46px;border:2px solid #707070;background:#dddddd"></div>
<span class="t" style="left:2577.40px;top:1299.98px;font-size:24px;line-height:30px;letter-spacing:0.109px;">Дополнительно</span>
</section>
</main>
</body></html>
